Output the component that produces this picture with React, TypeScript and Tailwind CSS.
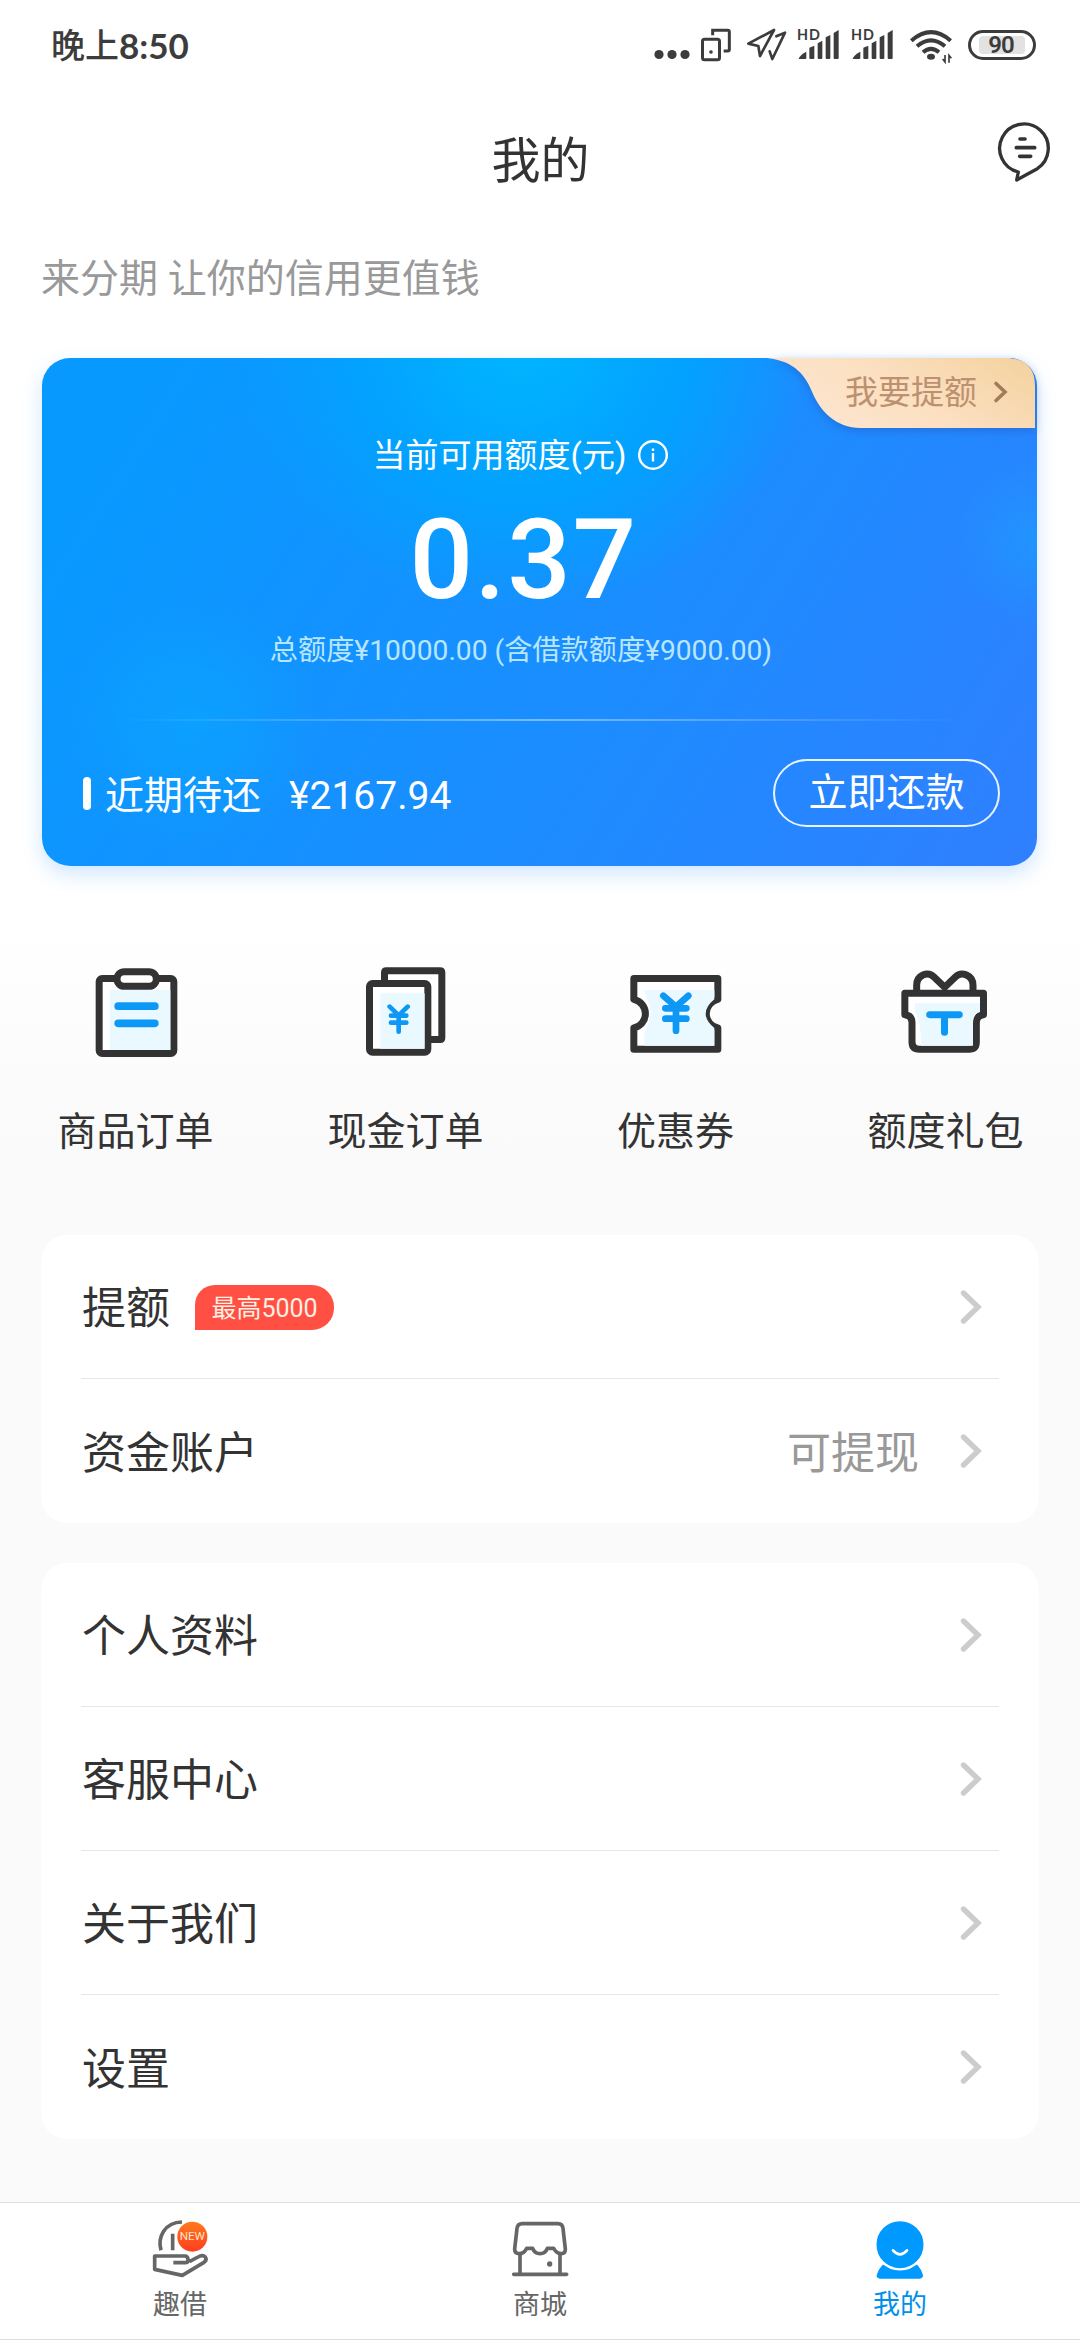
import type { ReactNode } from "react";

type MenuItem = {
    title: string;
    badge?: string;
    extra?: string;
}

const accountMenu: MenuItem[] = [
    { title: "提额", badge: "最高5000" },
    { title: "资金账户", extra: "可提现" },
]

const settingMenu: MenuItem[] = [
    { title: "个人资料" },
    { title: "客服中心" },
    { title: "关于我们" },
    { title: "设置" },
]

const Signal = () => (
    <svg className="overflow-visible" width="42" height="34" viewBox="0 0 126 102" fill="#3c3c3c">
        <text x="-3" y="36" fontSize="43" fontWeight="700" fontFamily="Lato, sans-serif" textLength="69">HD</text>
        <path d="M2 93 Q4 82 25 71 V90 Q25 93 22 93 Z" />
        <path d="M34 59 L49 53 V90 Q49 93 46 93 H37 Q34 93 34 90 Z" />
        <path d="M59 46 L73 38 V90 Q73 93 70 93 H62 Q59 93 59 90 Z" />
        <path d="M83 28 L97 21 V90 Q97 93 94 93 H86 Q83 93 83 90 Z" />
        <path d="M107 15 L122 6 V90 Q122 93 119 93 H110 Q107 93 107 90 Z" />
    </svg>
)

const StatusBar = () => (
    <div className="flex h-[92px] justify-between pr-[44px] pl-[51px] pt-7">
        <div className="flex h-[36px] items-center text-[34px] font-medium text-[#3c3c3c]">
            <span>晚上</span>
            <span className="-mt-0.5 font-[Lato] text-[35px] font-bold">8:50</span>
        </div>
        <div className="flex items-start">
            <svg width="36" height="34" viewBox="0 0 36 34" fill="#3c3c3c">
                <circle cx="5" cy="26.5" r="4.6" />
                <circle cx="18" cy="26.5" r="4.6" />
                <circle cx="31" cy="26.5" r="4.6" />
            </svg>
            <svg className="ml-[11px]" width="30" height="34" viewBox="0 0 90 102" fill="none" stroke="#3c3c3c" strokeWidth="9">
                <rect x="4.5" y="34" width="51" height="61" rx="6" />
                <path d="M35 22 V7 H80 Q85 7 85 12 V64 Q85 69 80 69 H68" />
                <circle cx="30" cy="72" r="5.5" fill="#3c3c3c" stroke="none" />
            </svg>
            <svg className="ml-4" width="40" height="34" viewBox="0 0 120 102" fill="none" stroke="#3c3c3c" strokeWidth="8" strokeLinejoin="round" strokeLinecap="round">
                <path d="M4 47 L81 6 L39 84 L34 54 Z" />
                <path d="M88 25 L114 14 L76 93 L68 70" />
            </svg>
            <span className="ml-[11px]"><Signal /></span>
            <span className="ml-3"><Signal /></span>
            <svg className="ml-4" width="44" height="36" viewBox="0 0 132 108" fill="none" stroke="#3c3c3c" strokeWidth="12">
                <path d="M4 38 Q63 -13 122 38" />
                <path d="M21 55 Q63 19 105 55" />
                <path d="M39 73 Q63 52 87 73" />
                <ellipse cx="63" cy="86" rx="12" ry="9" fill="#3c3c3c" stroke="none" />
                <path d="M105 81 V102 L98 93 M117 104 V82 L124 91" strokeWidth="5" />
            </svg>
            <div className="mt-0.5 ml-3.5 flex h-[30px] w-[68px] rounded-full border-[3px] border-[#3c3c3c] px-2 py-[3px]">
                <div className="flex flex-1 items-center justify-center rounded-sm bg-[#e2e2e2] pr-[2px] text-[24px] leading-none font-semibold tracking-[-1px] text-[#3c3c3c]">90</div>
            </div>
        </div>
    </div>
)

const Header = () => (
    <header className="flex h-[136px] items-center justify-between pr-[29px] pl-[30px]">
        <div className="w-[54px]"></div>
        <h1 className="pt-1 text-[49px] text-[#333]">我的</h1>
        <svg className="-mt-4" width="54" height="61" viewBox="-3 -2 162 183" fill="none" stroke="#333" strokeWidth="10" strokeLinejoin="round" strokeLinecap="round">
            <path d="M61 148 A73 73 0 1 1 118 138 Q90 153 56 172 Z" />
            <path d="M66 49H81 M55 75H110 M65 101H98" strokeWidth="11" />
        </svg>
    </header>
)

const CreditCard = () => (
    <section className="relative mx-[42px] h-[508px] w-[995px] rounded-[28px] bg-[radial-gradient(circle_at_100%_36%,#1f98ffcc_0px,#1f98ff00_85px),radial-gradient(circle_at_15%_72%,#0aa4ffcc_0px,#0aa4ff00_125px),radial-gradient(ellipse_290px_270px_at_48%_-3%,#00b6ff_0%,#04a0ff_60%,#04a0ff00_100%),linear-gradient(122deg,#0899ff_10%,#1a8eff_54%,#2f80ff_98%)] text-white shadow-[0_8px_20px_rgba(40,140,255,0.22)]">
        <div className="absolute top-0 right-[2px] h-[70px] w-[268px]">
            <svg className="absolute inset-0 overflow-visible drop-shadow-[0_3px_4px_rgba(40,70,160,0.35)]" width="268" height="70" viewBox="0 0 268 70">
                <defs>
                    <linearGradient id="gold" x1="0" y1="0.6" x2="1" y2="0.2">
                        <stop offset="0" stopColor="#fde6d0" />
                        <stop offset="0.5" stopColor="#fbdfc0" />
                        <stop offset="1" stopColor="#f5d3a1" />
                    </linearGradient>
                </defs>
                <path d="M0 0 H242 Q268 2 268 28 V70 H94 C68 70 53 52 46 36 C39 18 28 3 0 0 Z" fill="url(#gold)" />
            </svg>
            <div className="relative flex h-[68px] items-center pl-[78px] text-[33px] text-[#bd9170]">
                <span className="pt-0.5">我要提额</span>
                <svg className="ml-4" width="16" height="24" viewBox="0 0 16 24" fill="none" stroke="#a27b5b" strokeWidth="3.6" strokeLinecap="round">
                    <path d="M3 3.5 L12 12 L3 20.5" />
                </svg>
            </div>
        </div>
        <div className="flex flex-col items-center pr-[37px] pt-[77px]">
            <div className="flex h-10 items-center text-[33px]">
                <span className="pt-0.5">当前可用额度(元)</span>
                <svg className="ml-[11px]" width="32" height="32" viewBox="0 0 32 32" fill="none" stroke="#fff" strokeWidth="2.4">
                    <circle cx="16" cy="16" r="13.8" />
                    <path d="M16 14 V22.5 M16 9.4 V12" />
                </svg>
            </div>
            <div className="mt-[27px] h-[116px] pl-[5px] text-[112px] leading-[116px] font-medium tracking-[1.5px]">0.37</div>
            <div className="mt-[15px] h-9 text-[28.2px] leading-9 whitespace-nowrap text-[#b9e6ff]">总额度¥10000.00 (含借款额度¥9000.00)</div>
        </div>
        <div className="mx-[70px] mt-[50px] h-[2px] bg-linear-to-r from-white/0 via-white/40 to-white/0"></div>
        <div className="mt-[38px] flex items-center pr-[37px] pl-[41px] text-[39px]">
            <span className="h-[33px] w-[8px] rounded-sm bg-white"></span>
            <span className="ml-[14px] pt-1.5 leading-[60px]">近期待还</span>
            <span className="ml-[28px] pt-1.5 leading-[60px]">¥2167.94</span>
            <button className="ml-auto flex h-[68px] w-[227px] items-center justify-center rounded-full border-2 border-white/90 leading-none">立即还款</button>
        </div>
    </section>
)

const icons: { label: string; icon: ReactNode }[] = [
    {
        label: "商品订单",
        icon: (
            <>
                <rect x="26.5" y="55.5" width="224" height="225" rx="9" fill="#fff" />
                <path d="M58 90H240V270H58Z" fill="#eaf8ff" stroke="none" />
                <rect x="80" y="35" width="118" height="44" rx="22" fill="#fff" />
                <path d="M83.5 138.5H193.5 M83.5 190H193.5" stroke="#0e98f5" strokeWidth="23" />
            </>
        ),
    },
    {
        label: "现金订单",
        icon: (
            <>
                <path d="M72.5 66 V38 Q72.5 32.5 78 32.5 H239 Q244.5 32.5 244.5 38 V233 Q244.5 238.5 239 238.5 H205" fill="#fff" />
                <rect x="27.5" y="70.5" width="175" height="206" rx="9" fill="#fff" />
                <path d="M60 100H193V266H60Z" fill="#eaf8ff" stroke="none" />
                <path d="M88 140 L115 166 L142 140 M92 167H138 M92 188H138 M115 167V215" stroke="#0e98f5" strokeWidth="14" />
            </>
        ),
    },
    {
        label: "优惠券",
        icon: (
            <>
                <path d="M10.5 118 V55.5 H262.5 V118 A44 44 0 0 0 262.5 204 V267.5 H10.5 V204 A44 44 0 0 0 10.5 118 Z" fill="#fff" />
                <path d="M42 90H252V118 Q200 161 252 204 V257H42V218 Q75 161 48 112Z" fill="#eaf8ff" stroke="none" />
                <path d="M99 107 L137 140 L174 107 M105 145H168 M105 176H168 M137 145V212" stroke="#0e98f5" strokeWidth="20" />
            </>
        ),
    },
    {
        label: "额度礼包",
        icon: (
            <>
                <path d="M49 92 V76 C49 46 82 32 101 51 L133 82 L165 51 C184 32 218 46 218 76 V92" fill="#fff" />
                <path d="M13.5 99.5 H249.5 V164 Q228 166 228 188 V246 Q228 267.5 206 267.5 H57 Q35 267.5 35 246 V188 Q35 166 13.5 164 Z" fill="#fff" />
                <path d="M44 130H239V155 Q218 162 218 188V257H62 Q64 190 44 155Z" fill="#eaf8ff" stroke="none" />
                <path d="M88 164H177 M132.5 164V217" stroke="#0e98f5" strokeWidth="21" />
            </>
        ),
    },
]

const Shortcuts = () => (
    <div className="grid h-[369px] grid-cols-4 bg-linear-to-b from-white from-15% to-[#fafafa] to-75% pt-[94px]">
        {icons.map((item) => (
            <div key={item.label} className="flex flex-col items-center">
                <svg width="100" height="100" viewBox="-16 0 300 300" fill="none" stroke="#333" strokeWidth="21" strokeLinejoin="round" strokeLinecap="round">
                    {item.icon}
                </svg>
                <span className="mt-[43px] pl-px text-[39px] leading-[58px] text-[#333]">{item.label}</span>
            </div>
        ))}
    </div>
)

const MenuCard = ({ items }: { items: MenuItem[] }) => (
    <ul className="mx-[41px] rounded-[26px] bg-white px-10">
        {items.map((item) => (
            <li key={item.title} className="flex h-36 items-center border-b-[1.5px] border-[#e6e6e6] pr-4 pl-[1px] text-[44px] text-[#333] last:border-b-0">
                <span className="pt-[5px]">{item.title}</span>
                {item.badge && (
                    <span className="mt-px ml-[25px] flex h-[45px] w-[139px] items-center justify-center rounded-[22px] rounded-tl-[20px] rounded-bl-none bg-[#ff5043] pt-[3px] text-[25px] text-[#ffeee2]">{item.badge}</span>
                )}
                <span className="ml-auto pt-[5px] text-[#999]">{item.extra}</span>
                <svg className="ml-10" width="24" height="38" viewBox="0 0 24 38" fill="none" stroke="#ccc" strokeWidth="5.4" strokeLinecap="round">
                    <path d="M4.5 5 L19 19 L4.5 33" />
                </svg>
            </li>
        ))}
    </ul>
)

const tabs: { label: string; active?: boolean; icon: ReactNode }[] = [
    {
        label: "趣借",
        icon: (
            <>
                <path d="M39 100 C28 60 50 16 102 15 M74 50V100" />
                <path d="M76 137H112 Q120 137 120 128 Q120 117 110 117H20V157L103 175L168 136 Q178 128 172 120 Q164 112 150 120L124 134" />
                <circle cx="133" cy="59" r="48" fill="#fff" stroke="none" />
                <circle cx="133" cy="59" r="45" fill="url(#hot)" stroke="none" />
                <text x="95" y="69" fontSize="30" textLength="76" lengthAdjust="spacingAndGlyphs" fontFamily="Roboto, sans-serif" fill="#ffe3c8" stroke="none">NEW</text>
                <defs>
                    <linearGradient id="hot" x1="0" y1="0" x2="0" y2="1">
                        <stop offset="0" stopColor="#ff7a1c" />
                        <stop offset="1" stopColor="#ff3d20" />
                    </linearGradient>
                </defs>
            </>
        ),
    },
    {
        label: "商城",
        icon: (
            <>
                <path d="M43 20H150 Q163 20 165 34L172 96 Q172 110 160 110 Q146 110 137 94H118 Q112 110 96 110 Q80 110 74 94H56 Q48 110 34 110 Q20 110 20 96L27 34 Q29 20 43 20Z" />
                <path d="M36 112V172 M156 112V172 M17 172H176" strokeLinecap="round" />
                <circle cx="125" cy="141" r="8" fill="#666" stroke="none" />
            </>
        ),
    },
    {
        label: "我的",
        active: true,
        icon: (
            <>
                <path d="M44 143H148Q160 156 165 175Q165 185 155 185H36Q26 185 26 175Q31 156 44 143Z" fill="#09f" stroke="none" />
                <circle cx="96" cy="83" r="74" fill="#09f" stroke="#fff" strokeWidth="7" />
                <path d="M75 100 Q96 124 117 100" stroke="#fff" strokeWidth="8" strokeLinecap="round" />
            </>
        ),
    },
]

const TabBar = () => (
    <nav className="mt-auto grid h-[138px] grid-cols-3 border-t border-b border-[#dedede] bg-white">
        {tabs.map((tab) => (
            <div key={tab.label} className="flex flex-col items-center pt-3.5">
                <svg width="64" height="64" viewBox="0 0 192 192" fill="none" stroke="#666" strokeWidth="11" strokeLinejoin="round">
                    {tab.icon}
                </svg>
                <span className={tab.active ? "mt-1 text-[27px] leading-10 text-[#0090ea]" : "mt-1 text-[27px] leading-10 text-[#666]"}>{tab.label}</span>
            </div>
        ))}
    </nav>
)

export const App = () => {
    return (
        <main className="flex h-[2340px] w-[1080px] flex-col overflow-hidden bg-[#fafafa] font-[Roboto,'Noto_Sans_CJK_SC',sans-serif]">
            <div className="bg-white">
                <StatusBar />
                <Header />
                <p className="mb-[50px] h-[80px] pt-[21px] pl-[41px] text-[39px] leading-[60px] text-[#999]">来分期 让你的信用更值钱</p>
                <CreditCard />
            </div>
            <Shortcuts />
            <div className="flex flex-col gap-10">
                <MenuCard items={accountMenu} />
                <MenuCard items={settingMenu} />
            </div>
            <TabBar />
        </main>
    )
}

export default App
